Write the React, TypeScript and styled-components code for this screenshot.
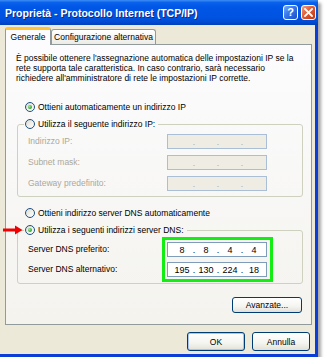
import React from "react";
import styled, { createGlobalStyle } from "styled-components";

const GlobalStyle = createGlobalStyle`
  html, body { margin: 0; padding: 0; background: #ffffff; }
  body {
    font-family: "Liberation Sans", Arial, sans-serif;
    font-size: 8.5px;
    color: #000000;
  }
  * { box-sizing: border-box; }
`;

const Window = styled.div`
  position: relative;
  width: 318px;
  display: flex;
  flex-direction: column;
  box-shadow: 3px 3px 3px rgba(0, 0, 0, 0.35);
`;

const TitleBar = styled.div`
  height: 25px;
  display: flex;
  align-items: center;
  gap: 3px;
  padding: 0 2px 0 5px;
  background: linear-gradient(
    to bottom,
    #3d8ef5 0%,
    #0a61ec 10%,
    #0056e6 28%,
    #0053e1 70%,
    #004bd3 88%,
    #003fb8 100%
  );
`;

const TitleText = styled.div`
  flex: 1;
  color: #ffffff;
  font-weight: bold;
  font-size: 10.5px;
  text-shadow: 1px 1px 0 #0b2a8c;
  white-space: nowrap;
`;

const CaptionButton = styled.div<{ $kind: "help" | "close" }>`
  width: 15px;
  height: 15px;
  border: 1px solid #ffffff;
  border-radius: 3px;
  display: flex;
  align-items: center;
  justify-content: center;
  color: #ffffff;
  font-weight: bold;
  font-size: 11px;
  line-height: 1;
  background: ${(p) =>
    p.$kind === "help"
      ? "linear-gradient(135deg, #74acfa 0%, #3776ea 45%, #1b4fcb 100%)"
      : "linear-gradient(135deg, #f2a083 0%, #df5b33 45%, #c03a14 100%)"};
`;

const Body = styled.div`
  background: #ece9d8;
  border-right: 3px solid #0b3ed6;
  border-bottom: 3px solid #0b3ed6;
  padding: 2px 3px 3px 5px;
  display: flex;
  flex-direction: column;
`;

const TabStrip = styled.div`
  height: 18px;
  display: flex;
  align-items: flex-end;
  margin-bottom: -1px;
  position: relative;
  z-index: 1;
`;

const Tab = styled.div<{ $active?: boolean; $w: number }>`
  width: ${(p) => p.$w}px;
  height: ${(p) => (p.$active ? 18 : 15)}px;
  margin-bottom: ${(p) => (p.$active ? 0 : 1)}px;
  border: 1px solid #919b9c;
  border-bottom: none;
  border-top: ${(p) => (p.$active ? "3px solid #ffc33c" : "1px solid #919b9c")};
  border-radius: 3px 3px 0 0;
  background: ${(p) =>
    p.$active ? "#fcfcfe" : "linear-gradient(to bottom, #ffffff, #ecebe6)"};
  display: flex;
  align-items: center;
  justify-content: center;
  white-space: nowrap;
  padding-bottom: ${(p) => (p.$active ? 1 : 0)}px;
`;

const Panel = styled.div`
  height: 281px;
  border: 1px solid #919b9c;
  background: linear-gradient(to bottom, #fcfcfe, #f4f3ee);
  padding: 8px 8px 10px 10px;
  display: flex;
  flex-direction: column;
`;

const Description = styled.p`
  margin: 0;
  line-height: 10px;
`;

const RadioRow = styled.div<{ $mt?: number; $ml?: number }>`
  display: flex;
  align-items: center;
  gap: 3px;
  height: 12px;
  margin-top: ${(p) => p.$mt ?? 0}px;
  margin-left: ${(p) => p.$ml ?? 0}px;
  white-space: nowrap;
`;

const Radio = styled.span<{ $checked?: boolean }>`
  position: relative;
  width: 10px;
  height: 10px;
  flex: none;
  border-radius: 50%;
  border: 1px solid #1c5180;
  background: linear-gradient(135deg, #dcd9cf 0%, #f2f1ec 55%, #ffffff 100%);
  &::after {
    content: "";
    display: ${(p) => (p.$checked ? "block" : "none")};
    position: absolute;
    left: 2px;
    top: 2px;
    width: 4px;
    height: 4px;
    border-radius: 50%;
    background: radial-gradient(circle at 35% 35%, #9be89b, #2aa52a 70%);
  }
`;

const Group = styled.fieldset<{ $mt: number; $pt: number; $pb: number }>`
  margin: ${(p) => p.$mt}px 0 0 1px;
  width: 286px;
  min-width: 0;
  border: 1px solid #d0d0bf;
  border-radius: 3px;
  padding: ${(p) => p.$pt}px 0 ${(p) => p.$pb}px 10px;
`;

const Legend = styled.legend`
  margin-left: -4px;
  padding: 0 3px 0 1px;
`;

const FieldList = styled.div`
  display: flex;
  flex-direction: column;
  gap: 6px;
`;

const FieldRow = styled.div`
  display: flex;
  align-items: center;
  height: 15px;
`;

const FieldLabel = styled.span<{ $disabled?: boolean; $w: number }>`
  width: ${(p) => p.$w}px;
  flex: none;
  color: ${(p) => (p.$disabled ? "#aca899" : "#000000")};
  line-height: 15px;
  white-space: nowrap;
`;

const IpBox = styled.div<{ $disabled?: boolean }>`
  width: 100px;
  height: 15px;
  flex: none;
  display: flex;
  align-items: center;
  padding: 0 2px 0 4px;
  border: 1px solid ${(p) => (p.$disabled ? "#aabed6" : "#7f9db9")};
  background: ${(p) => (p.$disabled ? "#eeece3" : "#ffffff")};
  color: ${(p) => (p.$disabled ? "#aca899" : "#000000")};
  font-size: 9px;
`;

const Octet = styled.span`
  width: 20px;
  text-align: center;
`;

const Dot = styled.span`
  width: 4px;
  text-align: center;
`;

const DnsGrid = styled.div`
  display: flex;
`;

const LabelColumn = styled.div`
  display: flex;
  flex-direction: column;
  gap: 5px;
  padding-top: 5px;
`;

const Highlight = styled.div`
  border: 3px solid #12ee12;
  padding: 2px 3px 2px 2px;
  display: flex;
  flex-direction: column;
  gap: 5px;
`;

const Button = styled.div<{ $w: number; $h: number; $default?: boolean }>`
  width: ${(p) => p.$w}px;
  height: ${(p) => p.$h}px;
  border: 1px solid #003c74;
  border-radius: 3px;
  background: linear-gradient(to bottom, #ffffff 0%, #f4f4f0 60%, #e3e0d6 100%);
  box-shadow: ${(p) => (p.$default ? "inset 0 0 0 1px #a9c5ef" : "none")};
  display: flex;
  align-items: center;
  justify-content: center;
  white-space: nowrap;
`;

const AdvancedRow = styled.div`
  display: flex;
  justify-content: flex-end;
  margin-top: 13px;
  padding-right: 1px;
`;

const ButtonRow = styled.div`
  display: flex;
  justify-content: flex-end;
  gap: 7px;
  margin-top: 7px;
  padding-right: 2px;
`;

const Arrow = styled.svg`
  position: absolute;
  left: 3px;
  top: 225px;
`;

const IpField: React.FC<{ values?: string[]; disabled?: boolean }> = ({ values, disabled }) => {
  const v = values ?? ["", "", "", ""];
  return (
    <IpBox $disabled={disabled}>
      <Octet>{v[0]}</Octet>
      <Dot>.</Dot>
      <Octet>{v[1]}</Octet>
      <Dot>.</Dot>
      <Octet>{v[2]}</Octet>
      <Dot>.</Dot>
      <Octet>{v[3]}</Octet>
    </IpBox>
  );
};

export default function App() {
  return (
    <>
      <GlobalStyle />
      <Window>
        <TitleBar>
          <TitleText>Proprietà - Protocollo Internet (TCP/IP)</TitleText>
          <CaptionButton $kind="help">?</CaptionButton>
          <CaptionButton $kind="close">
            <svg width="9" height="9" viewBox="0 0 9 9">
              <path d="M1 1 L8 8 M8 1 L1 8" stroke="#ffffff" strokeWidth="1.8" strokeLinecap="square" />
            </svg>
          </CaptionButton>
        </TitleBar>
        <Body>
          <TabStrip>
            <Tab $active $w={46}>Generale</Tab>
            <Tab $w={105}>Configurazione alternativa</Tab>
          </TabStrip>
          <Panel>
            <Description>
              È possibile ottenere l'assegnazione automatica delle impostazioni IP se la
              <br />
              rete supporta tale caratteristica. In caso contrario, sarà necessario
              <br />
              richiedere all'amministratore di rete le impostazioni IP corrette.
            </Description>
            <RadioRow $mt={18} $ml={9}>
              <Radio $checked />
              <span>Ottieni automaticamente un indirizzo IP</span>
            </RadioRow>
            <Group $mt={5} $pt={4} $pb={5}>
              <Legend>
                <RadioRow>
                  <Radio />
                  <span>Utilizza il seguente indirizzo IP:</span>
                </RadioRow>
              </Legend>
              <FieldList>
                <FieldRow>
                  <FieldLabel $disabled $w={139}>Indirizzo IP:</FieldLabel>
                  <IpField disabled />
                </FieldRow>
                <FieldRow>
                  <FieldLabel $disabled $w={139}>Subnet mask:</FieldLabel>
                  <IpField disabled />
                </FieldRow>
                <FieldRow>
                  <FieldLabel $disabled $w={139}>Gateway predefinito:</FieldLabel>
                  <IpField disabled />
                </FieldRow>
              </FieldList>
            </Group>
            <RadioRow $mt={10} $ml={9}>
              <Radio />
              <span>Ottieni indirizzo server DNS automaticamente</span>
            </RadioRow>
            <Group $mt={5} $pt={1} $pb={1}>
              <Legend>
                <RadioRow>
                  <Radio $checked />
                  <span>Utilizza i seguenti indirizzi server DNS:</span>
                </RadioRow>
              </Legend>
              <DnsGrid>
                <LabelColumn>
                  <FieldLabel $w={134}>Server DNS preferito:</FieldLabel>
                  <FieldLabel $w={134}>Server DNS alternativo:</FieldLabel>
                </LabelColumn>
                <Highlight>
                  <IpField values={["8", "8", "4", "4"]} />
                  <IpField values={["195", "130", "224", "18"]} />
                </Highlight>
              </DnsGrid>
            </Group>
            <AdvancedRow>
              <Button $w={70} $h={16}>Avanzate...</Button>
            </AdvancedRow>
          </Panel>
          <ButtonRow>
            <Button $w={58} $h={19} $default>OK</Button>
            <Button $w={58} $h={19}>Annulla</Button>
          </ButtonRow>
        </Body>
        <Arrow width="20" height="10" viewBox="0 0 20 10">
          <path d="M0 5 H13" stroke="#f00000" strokeWidth="3" />
          <path d="M12 0.5 L19.5 5 L12 9.5 Z" fill="#f00000" />
        </Arrow>
      </Window>
    </>
  );
}
